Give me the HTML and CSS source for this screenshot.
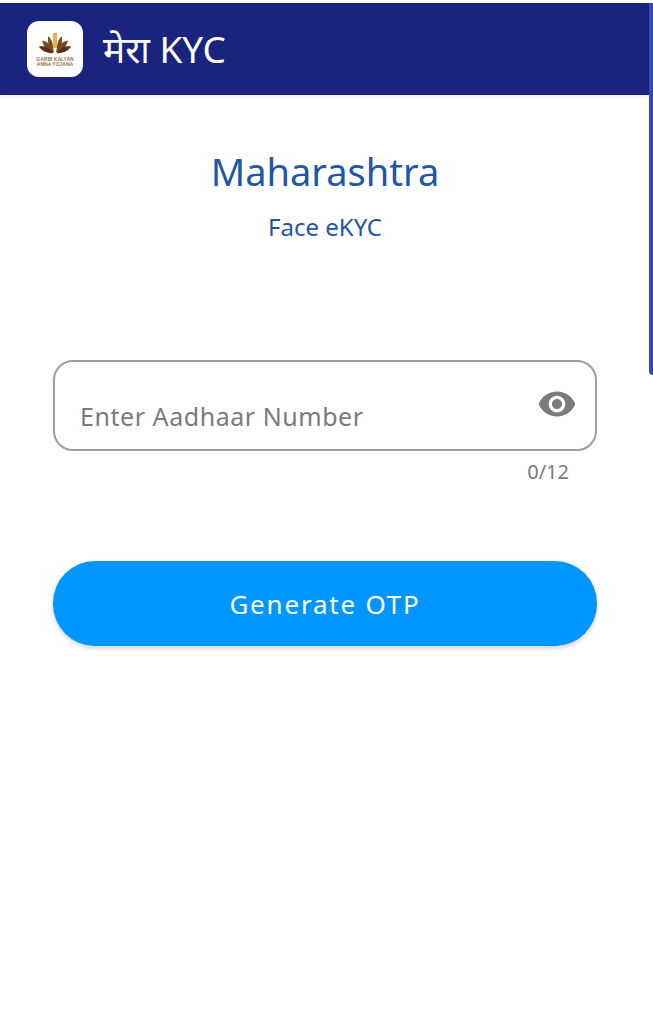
FILE: index.html
```html
<!DOCTYPE html>
<html lang="en">
<head>
  <meta charset="UTF-8">
  <meta name="viewport" content="width=device-width, initial-scale=1.0">
  <title>मेरा KYC</title>
  <link rel="stylesheet" href="styles.css">
</head>
<body>
  <header class="app-bar">
    <div class="logo">
      <svg class="logo-mark" viewBox="0 0 40 24" aria-hidden="true">
        <path fill="#e2b25c" d="M17.5 0h5v18h-5z"/>
        <path fill="#7a4a1e" d="M18 22C13 20 11 12 12 4c4 3 6 9 6 18z"/>
        <path fill="#7a4a1e" d="M22 22c5-2 7-10 6-18-4 3-6 9-6 18z"/>
        <path fill="#7d4a1c" d="M19 23C11 22 6 16 5 9c6 1 12 6 14 14z"/>
        <path fill="#7d4a1c" d="M21 23c8-1 13-7 14-14-6 1-12 6-14 14z"/>
        <path fill="#5a3210" d="M18 24C10 24 4 21 1 16c7-1 14 2 17 8z"/>
        <path fill="#5a3210" d="M22 24c8 0 14-3 17-8-7-1-14 2-17 8z"/>
      </svg>
      <div class="logo-text">GARIB KALYAN</div>
      <div class="logo-text">ANNA YOJANA</div>
    </div>
    <h1 class="app-title">मेरा KYC</h1>
  </header>

  <div class="scroll-thumb"></div>

  <main class="content">
    <h2 class="state">Maharashtra</h2>
    <p class="subtitle">Face eKYC</p>

    <div class="field">
      <span class="placeholder">Enter Aadhaar Number</span>
      <svg class="eye" viewBox="0 0 24 24" aria-hidden="true">
        <path d="M12 4.5C7 4.5 2.73 7.61 1 12c1.73 4.39 6 7.5 11 7.5s9.27-3.11 11-7.5c-1.73-4.39-6-7.5-11-7.5zM12 17c-2.76 0-5-2.24-5-5s2.24-5 5-5 5 2.24 5 5-2.24 5-5 5zm0-8c-1.66 0-3 1.34-3 3s1.34 3 3 3 3-1.34 3-3-1.34-3-3-3z"/>
      </svg>
    </div>
    <div class="counter">0/12</div>

    <button class="submit">Generate OTP</button>
  </main>
</body>
</html>
```

FILE: styles.css
```css
:root {
  --navy: #1a237e;
  --title-blue: #1f56a8;
  --sky: #0096ff;
  --grey: #7b7b7b;
}

body {
  margin: 0;
  height: 1024px;
  overflow: hidden;
  background: #fff;
  font-family: "Noto Sans", "Open Sans", sans-serif;
}

.app-bar {
  margin-top: 3px;
  height: 92px;
  padding-left: 27px;
  display: flex;
  align-items: center;
  gap: 20px;
  background: var(--navy);
  box-shadow: 0 2px 4px rgba(26, 35, 126, 0.08);
}

.logo {
  width: 56px;
  height: 56px;
  border-radius: 12px;
  background: #fff;
  display: flex;
  flex-direction: column;
  align-items: center;
  padding-top: 10px;
  box-sizing: border-box;
}

.logo-mark {
  width: 34px;
  height: 24px;
  margin-bottom: 2px;
}

.logo-text {
  font-family: "Liberation Sans", sans-serif;
  font-size: 5px;
  line-height: 5px;
  font-weight: bold;
  color: #96784a;
  white-space: nowrap;
}

.app-title {
  margin: 0 0 2px;
  font-size: 37px;
  font-weight: 400;
  color: #fff;
}

/* overlay scrollbar on the right edge */
.scroll-thumb {
  position: absolute;
  top: 3px;
  right: 0;
  width: 4px;
  height: 372px;
  background: #3949ab;
  border-bottom-left-radius: 4px;
}

.content {
  padding: 0 56px 0 53px;
  display: flex;
  flex-direction: column;
}

.state {
  margin: 50px 0 0;
  text-align: center;
  font-size: 38px;
  line-height: 52px;
  font-weight: 400;
  color: var(--title-blue);
}

.subtitle {
  margin: 15px 0 0;
  text-align: center;
  font-size: 24px;
  line-height: 30px;
  color: var(--title-blue);
}

.field {
  margin-top: 118px;
  height: 91px;
  box-sizing: border-box;
  border: 2px solid #9e9e9e;
  border-radius: 20px;
  padding: 0 24px 0 25px;
  display: flex;
  align-items: center;
  justify-content: space-between;
}

.placeholder {
  margin-top: 20px;
  font-size: 25px;
  letter-spacing: 0.55px;
  color: var(--grey);
}

.eye {
  width: 40px;
  height: 40px;
  margin-right: -6px;
  margin-bottom: 4px;
  fill: var(--grey);
}

.counter {
  margin-top: 8px;
  padding-right: 28px;
  text-align: right;
  font-size: 20px;
  line-height: 26px;
  color: var(--grey);
}

.submit {
  margin-top: 76px;
  height: 85px;
  border: none;
  border-radius: 42px;
  background: var(--sky);
  color: #fff;
  font-family: inherit;
  font-size: 26px;
  letter-spacing: 1.8px;
  box-shadow: 0 2px 5px rgba(0, 0, 0, 0.2);
}
```
